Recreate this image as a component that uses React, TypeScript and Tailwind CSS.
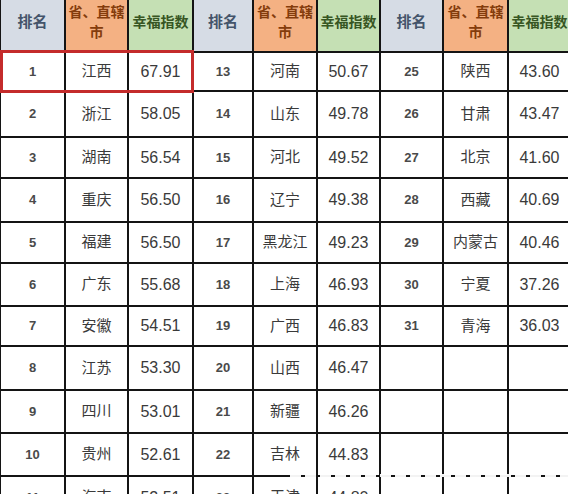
const ROWS: [string, string, string][][] = [
  [['1', '江西', '67.91'], ['13', '河南', '50.67'], ['25', '陕西', '43.60']],
  [['2', '浙江', '58.05'], ['14', '山东', '49.78'], ['26', '甘肃', '43.47']],
  [['3', '湖南', '56.54'], ['15', '河北', '49.52'], ['27', '北京', '41.60']],
  [['4', '重庆', '56.50'], ['16', '辽宁', '49.38'], ['28', '西藏', '40.69']],
  [['5', '福建', '56.50'], ['17', '黑龙江', '49.23'], ['29', '内蒙古', '40.46']],
  [['6', '广东', '55.68'], ['18', '上海', '46.93'], ['30', '宁夏', '37.26']],
  [['7', '安徽', '54.51'], ['19', '广西', '46.83'], ['31', '青海', '36.03']],
  [['8', '江苏', '53.30'], ['20', '山西', '46.47'], ['', '', '']],
  [['9', '四川', '53.01'], ['21', '新疆', '46.26'], ['', '', '']],
  [['10', '贵州', '52.61'], ['22', '吉林', '44.83'], ['', '', '']],
  [['11', '海南', '52.51'], ['23', '天津', '44.80'], ['', '', '']],
]

const FONT = "font-['Liberation_Sans','Noto_Sans_CJK_SC',sans-serif]"

function Header() {
  return (
    <>
      <div className="flex items-center justify-center bg-[#d6dce5] pb-[7px] text-[15px] font-bold text-[#44546a]">
        排名
      </div>
      <div className="flex items-center justify-center bg-[#f4b183] px-[2px] pb-[7px] text-center text-[14px] font-bold leading-[20px] text-[#843c0c]">
        省、直辖市
      </div>
      <div className="flex items-center justify-center bg-[#c5e0b4] pb-[7px] text-[14px] font-bold text-[#375623]">
        幸福指数
      </div>
    </>
  )
}

export default function App() {
  return (
    <div className={`relative h-[494px] w-[568px] overflow-hidden bg-white ${FONT}`}>
      <div className="grid grid-cols-[63px_61px_63px_58px_62px_61px_61px_63px_61px] grid-rows-[51px_37px_44px_39px_42px_39px_41px_38px_42px_41px_41px_41px] gap-[2px] bg-[#141414] pl-[1px]">
        <Header />
        <Header />
        <Header />
        {ROWS.map((row) =>
          row.map(([rank, name, score], i) => (
            <div key={`${rank}-${name}-${i}`} className="contents">
              <div className="flex items-center justify-center bg-white text-[13px] font-bold text-[#4a4a4a]">
                {rank}
              </div>
              <div className="flex items-center justify-center bg-white text-[15px] text-[#3a3a3a]">
                {name}
              </div>
              <div className="flex items-center justify-center bg-white text-[16px] text-[#3a3a3a]">
                {score}
              </div>
            </div>
          )),
        )}
      </div>

      {/* red highlight round the first place */}
      <div className="absolute left-0 top-[50px] h-[43px] w-[194px] border-[3px] border-[#c42b2b]" />

      {/* watermark smear over the bottom rule */}
      <div className="absolute left-[290px] right-0 top-[474px] h-[3px] bg-[repeating-linear-gradient(90deg,rgba(255,255,255,0.95)_0_11px,transparent_11px_15px)]" />
    </div>
  )
}
